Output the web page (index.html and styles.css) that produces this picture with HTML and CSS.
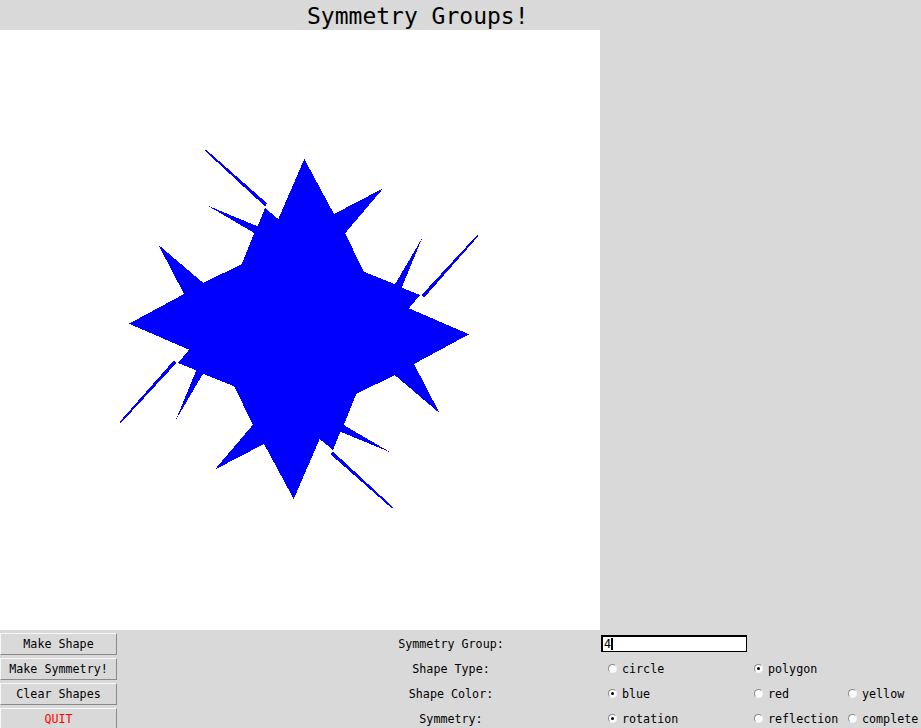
FILE: index.html
```html
<!DOCTYPE html>
<html>
<head>
<meta charset="utf-8">
<title>Symmetry Groups!</title>
<link rel="stylesheet" href="styles.css">
</head>
<body>
<div class="app">
  <div class="title">Symmetry Groups!</div>
  <div class="main">
    <div class="canvas">
      <svg width="600" height="600" viewBox="0 0 600 600" xmlns="http://www.w3.org/2000/svg">
        <defs>
          <polygon id="sliver" points="122.7,-34.1 178.1,-94 179.3,-92.8 125.4,-31.7"/>
        </defs>
        <g transform="translate(299 299)" fill="#0000ff" shape-rendering="crispEdges">
          <polygon points="5.3,-170 35,-115 84.3,-140.7 46,-95.7 65,-57.3 96,-44.7 123.3,-91.3 102.7,-41.3 121,-34 110,-20.7 170,5.3 115,35 140.7,84.3 95.7,46 57.3,65 44.7,96 91.3,123.3 41.3,102.7 34,121 20.7,110 -5.3,170 -35,115 -84.3,140.7 -46,95.7 -65,57.3 -96,44.7 -123.3,91.3 -102.7,41.3 -121,34 -110,20.7 -170,-5.3 -115,-35 -140.7,-84.3 -95.7,-46 -57.3,-65 -44.7,-96 -91.3,-123.3 -41.3,-102.7 -34,-121 -20.7,-110"/>
          <use href="#sliver"/>
          <use href="#sliver" transform="rotate(90)"/>
          <use href="#sliver" transform="rotate(180)"/>
          <use href="#sliver" transform="rotate(270)"/>
        </g>
      </svg>
    </div>
  </div>
  <div class="controls">
    <div class="btn c1">Make Shape</div>
    <div class="label c3">Symmetry Group:</div>
    <div class="entry c4"><span>4</span><span class="cursor"></span></div>

    <div class="btn c1">Make Symmetry!</div>
    <div class="label c3">Shape Type:</div>
    <div class="radio c4"><span class="ind"></span>circle</div>
    <div class="radio on c5"><span class="ind"></span>polygon</div>

    <div class="btn c1">Clear Shapes</div>
    <div class="label c3">Shape Color:</div>
    <div class="radio on c4"><span class="ind"></span>blue</div>
    <div class="radio c5"><span class="ind"></span>red</div>
    <div class="radio c6"><span class="ind"></span>yellow</div>

    <div class="btn quit c1">QUIT</div>
    <div class="label c3">Symmetry:</div>
    <div class="radio on c4"><span class="ind"></span>rotation</div>
    <div class="radio c5"><span class="ind"></span>reflection</div>
    <div class="radio c6"><span class="ind"></span>complete</div>
  </div>
</div>
</body>
</html>
```
FILE: styles.css
```css
html, body {
  margin: 0;
  padding: 0;
}
body {
  width: 921px;
  height: 728px;
  overflow: hidden;
  background: #d9d9d9;
  color: #000;
  font-family: "DejaVu Sans Mono", "Liberation Mono", monospace;
  font-size: 11.7px;
}
.app {
  display: flex;
  flex-direction: column;
}
.title {
  height: 30px;
  line-height: 30px;
  font-size: 23px;
  padding-left: 307px;
  padding-top: 1px;
  box-sizing: border-box;
  white-space: nowrap;
}
.main {
  display: flex;
}
.canvas {
  width: 600px;
  height: 600px;
  background: #fff;
}
.canvas svg {
  display: block;
}
.controls {
  display: grid;
  grid-template-columns: 117px 184px 300px 146px 94px 80px;
  grid-auto-rows: 25px;
  padding-top: 1px;
}
.c1 { grid-column: 1; }
.c3 { grid-column: 3; }
.c4 { grid-column: 4; }
.c5 { grid-column: 5; }
.c6 { grid-column: 6; }
.btn {
  margin: 2px 0 1px 0;
  height: 22px;
  box-sizing: border-box;
  border: 1px solid;
  border-color: #f8f8f8 #8a8a8a #8a8a8a #f8f8f8;
  background: #d9d9d9;
  display: flex;
  align-items: center;
  justify-content: center;
  white-space: nowrap;
}
.quit {
  color: #ff0000;
}
.label {
  display: flex;
  align-items: center;
  justify-content: center;
  white-space: nowrap;
}
.entry {
  align-self: center;
  width: 146px;
  height: 17px;
  box-sizing: border-box;
  border: 1px solid #000;
  border-top-width: 2px;
  border-left-width: 2px;
  background: #fff;
  display: flex;
  align-items: center;
  padding-left: 1px;
}
.cursor {
  width: 2px;
  height: 12px;
  background: #000;
}
.radio {
  display: flex;
  align-items: center;
  padding-left: 7px;
  white-space: nowrap;
}
.ind {
  width: 9px;
  height: 9px;
  box-sizing: border-box;
  border-radius: 50%;
  background: #fff;
  border: 1px solid;
  border-color: #8a8a8a #f4f4f4 #f4f4f4 #8a8a8a;
  margin-right: 5px;
  display: flex;
  align-items: center;
  justify-content: center;
}
.on .ind::after {
  content: "";
  width: 3px;
  height: 3px;
  border-radius: 50%;
  background: #000;
}
```
